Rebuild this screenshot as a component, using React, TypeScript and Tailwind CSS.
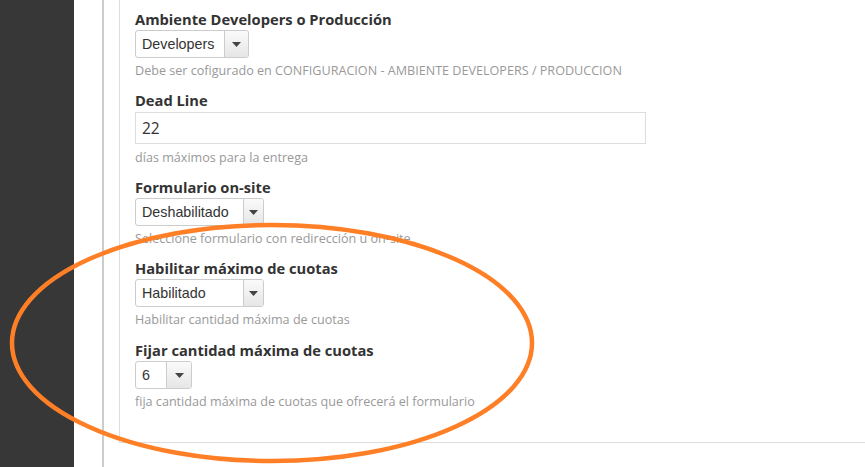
import React from "react";

const font = { fontFamily: '"Open Sans", "Liberation Sans", sans-serif' };

function Select({ value, width, textW }: { value: string; width: string; textW: string }) {
  return (
    <div
      className={`flex h-[28px] ${width} rounded-[3px] border border-[#cccccc] bg-white overflow-hidden`}
      style={{ fontFamily: '"Liberation Sans", Arial, sans-serif' }}
    >
      <div className={`${textW} pl-[6px] text-[14.3px] leading-[26px] text-[#333]`}>{value}</div>
      <div className="flex-1 border-l border-[#cccccc] bg-gradient-to-b from-[#fafafa] to-[#e6e6e6] flex items-center justify-center">
        <svg width="9" height="5" viewBox="0 0 9 5">
          <path d="M0 0 L9 0 L4.5 5 Z" fill="#444" />
        </svg>
      </div>
    </div>
  );
}

function Label({ children, className = "" }: { children: React.ReactNode; className?: string }) {
  return <div className={`text-[14.7px] leading-[20px] font-bold text-[#333] ${className}`}>{children}</div>;
}

function Help({ children }: { children: React.ReactNode }) {
  return <div className="mt-[4px] text-[12.6px] leading-[18px] text-[#999]">{children}</div>;
}

export default function App() {
  return (
    <div className="relative flex w-[865px] h-[467px] overflow-hidden bg-white" style={font}>
      <div className="w-[74px] shrink-0 bg-[#373737]" />
      <div className="ml-[28px] flex-1 border-l-2 border-[#cccccc]">
        <div className="ml-[15px] border-l border-b border-[#dddddd] pl-[15px] pt-[9px] pb-[31px]">
          <Label>Ambiente Developers o Producción</Label>
          <div className="mt-[1px]">
            <Select value="Developers" width="w-[114px]" textW="w-[88px]" />
          </div>
          <Help>Debe ser cofigurado en CONFIGURACION - AMBIENTE DEVELOPERS / PRODUCCION</Help>

          <Label className="mt-[10px]">Dead Line</Label>
          <div className="mt-[2px] h-[32px] w-[511px] border border-[#dddddd] pl-[6px] text-[15.5px] leading-[30px] text-[#333]">
            22
          </div>
          <div className="mt-[5px] text-[12.6px] leading-[18px] text-[#999]">días máximos para la entrega</div>

          <Label className="mt-[10px]">Formulario on-site</Label>
          <div className="mt-[1px]">
            <Select value="Deshabilitado" width="w-[129px]" textW="w-[107px]" />
          </div>
          <Help>Seleccione formulario con redirección u on-site</Help>

          <Label className="mt-[10px]">Habilitar máximo de cuotas</Label>
          <div className="mt-[1px]">
            <Select value="Habilitado" width="w-[129px]" textW="w-[107px]" />
          </div>
          <Help>Habilitar cantidad máxima de cuotas</Help>

          <Label className="mt-[11px]">Fijar cantidad máxima de cuotas</Label>
          <div className="mt-[1px]">
            <Select value="6" width="w-[57px]" textW="w-[30px]" />
          </div>
          <Help>fija cantidad máxima de cuotas que ofrecerá el formulario</Help>
        </div>
      </div>
      <svg className="absolute left-0 top-0 pointer-events-none" width="865" height="467">
        <ellipse cx="272" cy="343" rx="260" ry="118" fill="none" stroke="#ff7f27" strokeWidth="4.5" />
      </svg>
    </div>
  );
}
